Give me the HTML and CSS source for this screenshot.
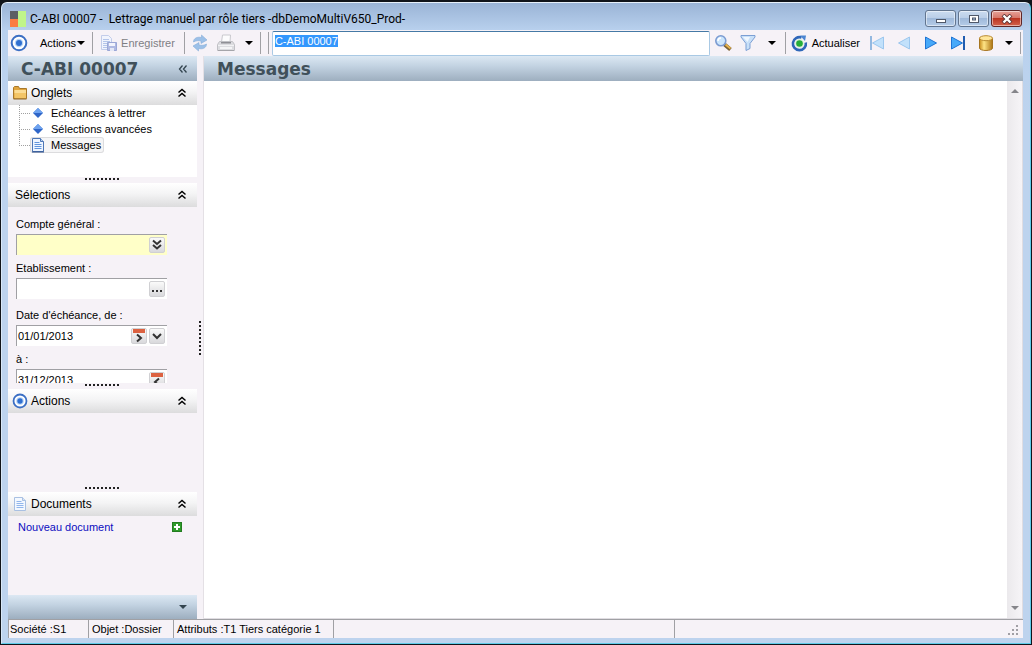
FILE: index.html
```
<!DOCTYPE html>
<html lang="fr">
<head>
    <meta charset="UTF-8">
    <meta name="viewport" content="width=device-width, initial-scale=1.0">
    <title>C-ABI 00007 - Lettrage manuel par rôle tiers</title>
    <link rel="stylesheet" href="styles.css">
</head>
<body>
    <div class="window">
        <header class="title-bar">
            <svg class="app-icon" width="16" height="16" viewBox="0 0 16 16">
                <rect width="8" height="8" fill="#5c6064"/>
                <rect y="8" width="8" height="8" fill="#fb7c41"/>
                <rect x="8" width="8" height="16" fill="#c0f58a"/>
            </svg>
            <span class="window-title">C-ABI 00007 -&nbsp; Lettrage manuel par rôle tiers -dbDemoMultiV650_Prod-</span>
            <div class="window-buttons">
                <button class="window-button" aria-label="Réduire">
                    <svg width="12" height="10" viewBox="0 0 12 10"><rect x="1.500" y="5.500" width="9" height="3" fill="#fff" stroke="#50596a"/></svg>
                </button>
                <button class="window-button" aria-label="Agrandir">
                    <svg width="12" height="10" viewBox="0 0 12 10"><rect x="1.500" y="1.500" width="9" height="7" fill="#fff" stroke="#50596a"/><rect x="4.500" y="4" width="3" height="2" fill="#a8c4e4" stroke="#50596a"/></svg>
                </button>
                <button class="window-button close" aria-label="Fermer">
                    <svg width="12" height="10" viewBox="0 0 12 10"><path d="M2 1l8 8M10 1l-8 8" stroke="#5b3335" stroke-width="4"/><path d="M2.500 1.500l7 7M9.500 1.500l-7 7" stroke="#fff" stroke-width="2.400"/></svg>
                </button>
            </div>
        </header>

        <div class="toolbar">
            <button class="tool menu">
                <svg width="18" height="18" viewBox="0 0 18 18"><circle cx="9" cy="9" r="7.300" fill="#fff" stroke="#3b6fc4" stroke-width="2"/><circle cx="9" cy="9" r="4.300" fill="#b9d5f7"/><circle cx="9" cy="9" r="3" fill="#2f6fd0"/></svg>
                <span class="menu-label">Actions</span>
                <span class="arrow"></span>
            </button>
            <span class="separator"></span>
            <button class="tool save" disabled>
                <svg width="17" height="17" viewBox="0 0 17 17">
                    <path d="M1.500 .5h7l3 3v11h-10z" fill="#f1f4fd" stroke="#c3cdea"/><path d="M3 4.500h6M3 6.500h7M3 8.500h4M3 10.500h4M3 12.500h4" stroke="#b4c5ea"/>
                    <path d="M7.500 7.500h9v8h-9z" fill="#b0bae3" stroke="#9ba7d6"/><path d="M9 8h6v3H9z" fill="#f2f4fd"/><path d="M10 13h4v3h-4z" fill="#e4e8f7"/>
                </svg>
                <span>Enregistrer</span>
            </button>
            <span class="separator"></span>
            <button class="tool" aria-label="Synchroniser">
                <svg width="16" height="18" viewBox="0 0 16 18">
                    <path d="M1.500 8c0-4 4-5.500 8-4.500V1l5.500 5-6 3.500V7C6.500 6.500 4 6.500 1.500 8z" fill="#9cc0e8" stroke="#86acd8" stroke-width=".6"/>
                    <path d="M14.500 10c0 4-4 5.500-8 4.500V17L1 12l6-3.500V11c2.500.5 5 .5 7.500-1z" fill="#9cc0e8" stroke="#86acd8" stroke-width=".6"/>
                </svg>
            </button>
            <button class="tool print" aria-label="Imprimer">
                <svg width="18" height="18" viewBox="0 0 18 18">
                    <path d="M4.500 8L5.500 1h8l-.5 7z" fill="#fcfcfd" stroke="#c9c9ce"/>
                    <path d="M2.500 7.500h13l2 3v6H.500v-6z" fill="#dcdce0" stroke="#c0c0c5"/><path d="M4 8h10v1.500H4z" fill="#8f8f95"/><path d="M1 11.500h16" stroke="#f2f2f4"/><path d="M3 14h12" stroke="#f5f5f7" stroke-width="2"/><path d="M1 16.500h16" stroke="#a5a5aa"/>
                </svg>
                <span class="arrow"></span>
            </button>
            <span class="separator"></span>
            <span class="separator"></span>
            <input class="search-box" type="text" value="C-ABI 00007" aria-label="Référence">
            <button class="tool" aria-label="Rechercher">
                <svg width="18" height="18" viewBox="0 0 18 18"><path d="M10.500 10.500l6 5" stroke="#7a6134" stroke-width="4"/><path d="M11.500 10.500l5 4" stroke="#e7b34c" stroke-width="2"/><circle cx="6.800" cy="6.800" r="5" fill="#cbe5fc" stroke="#7b9bd1" stroke-width="1.600"/><path d="M4 7a3 3 0 0 1 3-3" fill="none" stroke="#fff" stroke-width="1.500"/></svg>
            </button>
            <button class="tool filter" aria-label="Filtrer">
                <svg width="16" height="18" viewBox="0 0 16 18"><path d="M1 1.500h14v1.500l-5 6.500v5l-4 2V9.500L1 3z" fill="#c9e0f8" stroke="#7b9fd4"/><path d="M3 3h7L7.500 8z" fill="#eff7ff"/></svg>
                <span class="arrow"></span>
            </button>
            <span class="separator"></span>
            <button class="tool refresh">
                <svg width="17" height="17" viewBox="0 0 17 17"><path d="M14.800 7.500a6.500 6.500 0 1 1-4.300-5" fill="none" stroke="#2f67b9" stroke-width="2.600"/><path d="M9 .500h6l-1 5.500z" fill="#4b86d2"/><circle cx="8.500" cy="8.500" r="4.500" fill="#dff3dd"/><circle cx="8.500" cy="8.500" r="3.300" fill="#26ad3a"/></svg>
                <span>Actualiser</span>
            </button>
            <div class="record-nav">
                <button class="tool" aria-label="Premier">
                    <svg width="16" height="16" viewBox="0 0 16 16"><path d="M14.500 2v12L3.500 8z" fill="#c2e1fb" stroke="#9cc7ee"/><path d="M2 1v14" stroke="#93b8e0" stroke-width="2"/></svg>
                </button>
                <button class="tool" aria-label="Précédent">
                    <svg width="16" height="16" viewBox="0 0 16 16"><path d="M13.500 2v12L2.500 8z" fill="#c2e1fb" stroke="#9cc7ee"/></svg>
                </button>
                <button class="tool" aria-label="Suivant">
                    <svg width="16" height="16" viewBox="0 0 16 16"><path d="M2.500 2v12l11-6z" fill="#47a9f9" stroke="#1f74d4"/></svg>
                </button>
                <button class="tool" aria-label="Dernier">
                    <svg width="16" height="16" viewBox="0 0 16 16"><path d="M1.500 2v12l11-6z" fill="#47a9f9" stroke="#1f74d4"/><path d="M14 1v14" stroke="#205cb0" stroke-width="2"/></svg>
                </button>
            </div>
            <button class="tool database" aria-label="Base de données">
                <svg width="16" height="16" viewBox="0 0 16 16">
                    <defs><linearGradient id="gold"><stop offset="0" stop-color="#c88c1c"/><stop offset=".35" stop-color="#ffe486"/><stop offset="1" stop-color="#ad7414"/></linearGradient></defs>
                    <path d="M1.500 3v10c0 3.300 13 3.300 13 0V3z" fill="url(#gold)" stroke="#a77520"/><ellipse cx="8" cy="3.200" rx="6.500" ry="2.500" fill="#ffe69a" stroke="#b98a31"/>
                </svg>
                <span class="arrow"></span>
            </button>
            <span class="separator"></span>
        </div>

        <div class="workspace">
            <aside class="sidebar">
                <div class="banner">
                    <h1>C-ABI 00007</h1>
                    <button class="collapse" aria-label="Replier le volet">
                        <svg width="10" height="10" viewBox="0 0 10 10"><path d="M4.500 1.500L1.500 5l3 3.500M8.500 1.500l-3 3.500 3 3.500" fill="none" stroke="#33444f" stroke-width="1.300"/></svg>
                    </button>
                </div>

                <section class="panel">
                    <div class="panel-header">
                        <svg width="16" height="16" viewBox="0 0 16 16"><path d="M1.500 13.500v-11l1-1h4l1 2h7v10z" fill="#e0a43c" stroke="#a8782a"/><path d="M2.500 5h11.500v8.500H2.500z" fill="#f3c566"/><path d="M2.500 5h11.500v3H2.500z" fill="#fbdc94"/><path d="M1.500 14h13" stroke="#8d6323"/></svg>
                        <h2>Onglets</h2>
                        <button class="collapse" aria-label="Replier Onglets"><svg width="10" height="10" viewBox="0 0 10 10"><path d="M1.500 4.500L5 1.500l3.500 3M1.500 8.500L5 5.500l3.500 3" fill="none" stroke="#000" stroke-width="1.500"/></svg></button>
                    </div>
                    <ul class="tree">
                        <li>
                            <a href="#echeances"><svg width="16" height="16" viewBox="0 0 16 16"><path d="M8 3l5 5-5 5-5-5z" fill="#2f66c8"/><path d="M8 3l5 5H3z" fill="#6ea3f0"/></svg><span>Echéances à lettrer</span></a>
                        </li>
                        <li>
                            <a href="#selections"><svg width="16" height="16" viewBox="0 0 16 16"><path d="M8 3l5 5-5 5-5-5z" fill="#2f66c8"/><path d="M8 3l5 5H3z" fill="#6ea3f0"/></svg><span>Sélections avancées</span></a>
                        </li>
                        <li>
                            <a class="active" href="#messages"><svg width="16" height="16" viewBox="0 0 16 16"><path d="M2.500 1.500h8l3 3v10h-11z" fill="#eef5ff" stroke="#4d76b5"/><path d="M10.500 1.500v3h3" fill="#b8d1f2" stroke="#4d76b5"/><path d="M4.500 5.500h5M4.500 7.500h7M4.500 9.500h7M4.500 11.500h7" stroke="#6094dc"/><path d="M2 15h12" stroke="#2e4f88"/></svg><span>Messages</span></a>
                        </li>
                    </ul>
                </section>
                <div class="splitter"></div>

                <section class="panel">
                    <div class="panel-header plain">
                        <h2>Sélections</h2>
                        <button class="collapse" aria-label="Replier Sélections"><svg width="10" height="10" viewBox="0 0 10 10"><path d="M1.500 4.500L5 1.500l3.500 3M1.500 8.500L5 5.500l3.500 3" fill="none" stroke="#000" stroke-width="1.500"/></svg></button>
                    </div>
                    <form class="filters">
                        <label for="compte">Compte général :</label>
                        <div class="field required">
                            <input id="compte" type="text">
                            <button type="button" aria-label="Choisir un compte"><svg width="12" height="12" viewBox="0 0 12 12"><path d="M2 1.500l4 3.500 4-3.500M2 6l4 3.500L10 6" fill="none" stroke="#333" stroke-width="2"/></svg></button>
                        </div>
                        <label for="etablissement">Etablissement :</label>
                        <div class="field">
                            <input id="etablissement" type="text">
                            <button type="button" aria-label="Choisir un établissement"><svg width="12" height="12" viewBox="0 0 12 12"><path d="M1 7h2v2H1zM5 7h2v2H5zM9 7h2v2H9z" fill="#333"/></svg></button>
                        </div>
                        <label class="spaced" for="date-debut">Date d'échéance, de :</label>
                        <div class="field">
                            <input id="date-debut" type="text" value="01/01/2013">
                            <button class="calendar" type="button" aria-label="Date suivante"><svg width="14" height="14" viewBox="0 0 14 14"><path d="M1 0h12v4H1z" fill="#dc6241"/><path d="M5 5.500L9 9l-4 3.500" fill="none" stroke="#333" stroke-width="2"/></svg></button>
                            <button type="button" aria-label="Ouvrir le calendrier"><svg width="12" height="12" viewBox="0 0 12 12"><path d="M2 4l4 4 4-4" fill="none" stroke="#333" stroke-width="2"/></svg></button>
                        </div>
                        <label for="date-fin">à :</label>
                        <div class="field">
                            <input id="date-fin" type="text" value="31/12/2013">
                            <button class="calendar" type="button" aria-label="Date précédente"><svg width="14" height="14" viewBox="0 0 14 14"><path d="M1 0h12v4H1z" fill="#dc6241"/><path d="M9 5.500L5 9l4 3.500" fill="none" stroke="#333" stroke-width="2"/></svg></button>
                        </div>
                    </form>
                </section>
                <div class="splitter"></div>

                <section class="panel">
                    <div class="panel-header">
                        <svg width="16" height="16" viewBox="0 0 18 18"><circle cx="9" cy="9" r="7.300" fill="#fff" stroke="#3b6fc4" stroke-width="2"/><circle cx="9" cy="9" r="4.300" fill="#b9d5f7"/><circle cx="9" cy="9" r="3" fill="#2f6fd0"/></svg>
                        <h2>Actions</h2>
                        <button class="collapse" aria-label="Replier Actions"><svg width="10" height="10" viewBox="0 0 10 10"><path d="M1.500 4.500L5 1.500l3.500 3M1.500 8.500L5 5.500l3.500 3" fill="none" stroke="#000" stroke-width="1.500"/></svg></button>
                    </div>
                    <div class="actions-list"></div>
                </section>
                <div class="splitter"></div>

                <section class="panel documents">
                    <div class="panel-header">
                        <svg width="16" height="16" viewBox="0 0 16 16"><path d="M2.500 1.500h8l3 3v10h-11z" fill="#f3f8ff" stroke="#a9c0e2"/><path d="M10.500 1.500v3h3" fill="#d5e3f6" stroke="#a9c0e2"/><path d="M4.500 5.500h5M4.500 7.500h7M4.500 9.500h7M4.500 11.500h7" stroke="#92b6ec"/></svg>
                        <h2>Documents</h2>
                        <button class="collapse" aria-label="Replier Documents"><svg width="10" height="10" viewBox="0 0 10 10"><path d="M1.500 4.500L5 1.500l3.500 3M1.500 8.500L5 5.500l3.500 3" fill="none" stroke="#000" stroke-width="1.500"/></svg></button>
                    </div>
                    <div class="document-row">
                        <a href="#nouveau">Nouveau document</a>
                        <button aria-label="Ajouter un document"><svg width="10" height="10" viewBox="0 0 10 10"><rect x=".5" y=".5" width="9" height="9" fill="#2f9b2b" stroke="#237c20"/><path d="M5 2v6M2 5h6" stroke="#fff" stroke-width="2"/></svg></button>
                    </div>
                </section>
                <div class="sidebar-footer"><button aria-label="Autres volets"><span class="arrow"></span></button></div>
            </aside>

            <div class="side-splitter"></div>

            <main class="content">
                <div class="banner"><h1>Messages</h1></div>
                <div class="message-area">
                    <div class="scrollbar">
                        <svg width="8" height="4" viewBox="0 0 8 4"><path d="M0 4l4-4 4 4z" fill="#85858a"/></svg>
                        <svg width="8" height="4" viewBox="0 0 8 4"><path d="M0 0l4 4 4-4z" fill="#85858a"/></svg>
                    </div>
                </div>
            </main>
        </div>

        <footer class="status-bar">
            <span class="company">Société :S1</span>
            <span class="object">Objet :Dossier</span>
            <span class="attributes">Attributs :T1 Tiers catégorie 1</span>
            <span class="info"></span>
            <span class="rest"></span>
            <svg class="grip" width="12" height="12" viewBox="0 0 12 12"><path d="M8 0h2v2H8zM4 4h2v2H4zM8 4h2v2H8zM0 8h2v2H0zM4 8h2v2H4zM8 8h2v2H8z" fill="#a19fa5"/></svg>
        </footer>
    </div>

    <script>
        // Open with the reference selected
        const searchBox = document.querySelector('.search-box');
        searchBox.focus();
        searchBox.select();
    </script>
</body>
</html>
```
FILE: styles.css
```
:root {
    --frame-color: #bdd3ee;
    --bg-color: #f6f2f7;
    --border-color: #a0a0a4;
    --banner-text: #40505a;
    --banner: linear-gradient(#dce8f3, #c3d3e2 40%, #9daebf);
    --panel-header: linear-gradient(#ffffff, #f4f4f5 45%, #dcdcdd);
}

* {
    box-sizing: border-box;
}

body {
    margin: 0;
    height: 100vh;
    padding: 2px 1px 1px;
    overflow: hidden;
    background-color: #10141a;
    color: #000;
    font-family: "Liberation Sans", Arial, sans-serif;
    font-size: 11px;
}

button {
    display: flex;
    align-items: center;
    justify-content: center;
    flex: none;
    padding: 0;
    border: none;
    background: none;
    color: inherit;
    font: inherit;
}

svg {
    display: block;
    flex: none;
}

.window {
    display: flex;
    flex-direction: column;
    height: 100%;
    padding: 0 7px 5px 6px;
    border: 1px solid #5ecbe8;
    border-top-color: #e6f0fa;
    border-left-color: #d9e8f8;
    border-radius: 6px 6px 0 0;
    background: linear-gradient(#9ab4d6, #b9d1ee 28px, var(--frame-color) 118px);
}

/* Title bar */
.title-bar {
    display: flex;
    align-items: center;
    flex: none;
    height: 27px;
    padding: 4px 1px 0 2px;
}

.window-title {
    flex: 1;
    margin-left: 4px;
    font-family: Roboto, "Segoe UI", sans-serif;
    font-size: 12px;
    white-space: nowrap;
}

.window-buttons {
    display: flex;
    gap: 2px;
}

.window-button {
    width: 31px;
    height: 17px;
    border: 1px solid #62758f;
    border-radius: 3px;
    background: linear-gradient(#cbdcf0, #b9cde7 50%, #9fb9da 50%, #b5cce8);
    box-shadow: inset 0 0 0 1px rgba(255, 255, 255, 0.5);
}

.window-button.close {
    border-color: #5f2627;
    background: linear-gradient(#e7a299, #d67366 50%, #bb3522 50%, #d3624c);
}

/* Toolbar */
.toolbar {
    display: flex;
    align-items: center;
    flex: none;
    height: 26px;
    padding: 0 2px;
    background-color: var(--bg-color);
}

.tool:disabled {
    color: #7e7e84;
}

.menu-label {
    margin: 0 1px 0 12px;
}

.arrow {
    border: 4px solid transparent;
    border-top-color: currentColor;
    border-bottom: none;
}

.separator {
    flex: none;
    width: 1px;
    height: 22px;
    margin: 0 7px;
    background-color: var(--border-color);
}

.separator + .separator {
    margin: 0 3px 0 0;
}

.separator:last-child {
    margin-right: 0;
}

.save {
    gap: 4px;
    margin-right: 2px;
}

.print {
    gap: 10px;
    margin-left: 9px;
}

.search-box {
    flex: 1;
    align-self: stretch;
    min-width: 80px;
    margin: 1px 4px 0 0;
    padding: 1px 2px 7px;
    border: 1px solid #a9c9e4;
    border-top-color: #4579a5;
    border-radius: 2px;
    outline: none;
    background-color: #fff;
    font: inherit;
}

.search-box::selection {
    background-color: #3397fd;
    color: #fff;
}

.filter {
    gap: 12px;
    margin-left: 8px;
}

.filter + .separator {
    margin: 0 5px 0 9px;
}

.refresh {
    gap: 4px;
}

.record-nav {
    display: flex;
    gap: 11px;
    margin: 0 12px 0 9px;
}

.database {
    gap: 11px;
}

/* Workspace */
.workspace {
    display: flex;
    flex: 1;
    min-height: 0;
    background-color: var(--bg-color);
}

.banner {
    display: flex;
    align-items: center;
    justify-content: space-between;
    flex: none;
    height: 25px;
    padding: 0 9px 0 13px;
    background: var(--banner);
    color: var(--banner-text);
}

.banner h1 {
    margin: 0;
    font-family: "DejaVu Sans", Verdana, sans-serif;
    font-size: 17px;
    font-weight: bold;
    line-height: 24px;
}

.sidebar {
    display: flex;
    flex-direction: column;
    flex: none;
    width: 189px;
}

.panel {
    flex: none;
}

.panel-header {
    display: flex;
    align-items: center;
    gap: 3px;
    height: 24px;
    padding: 0 10px 0 4px;
    background: var(--panel-header);
}

.panel-header.plain {
    padding-left: 7px;
}

.panel-header h2 {
    flex: 1;
    margin: 0;
    font-size: 12px;
    font-weight: normal;
}

.tree {
    height: 72px;
    margin: 0;
    padding: 0 0 0 11px;
    background-color: #fff;
    list-style: none;
}

/* Dotted lines that join the tree items */
.tree li {
    display: flex;
    align-items: center;
    height: 16px;
    background: repeating-linear-gradient(#a0a0a0 0 1px, transparent 1px 2px) left top / 1px 100% no-repeat;
}

.tree li:last-child {
    background-size: 1px 8px;
}

.tree li::before {
    content: "";
    width: 11px;
    height: 1px;
    background: repeating-linear-gradient(90deg, #a0a0a0 0 1px, transparent 1px 2px);
}

.tree a {
    display: flex;
    align-items: center;
    gap: 5px;
    height: 16px;
    padding-right: 3px;
    border-radius: 3px;
    color: #000;
    text-decoration: none;
}

.tree a.active {
    background-color: #f5f5f6;
    box-shadow: inset 0 0 0 1px #dcdcde;
}

.splitter {
    display: flex;
    align-items: flex-start;
    justify-content: center;
    flex: none;
    height: 6px;
    padding-top: 1px;
}

.splitter::before {
    content: "";
    width: 35px;
    height: 2px;
    background: repeating-linear-gradient(90deg, #222 0 2px, transparent 2px 4px);
}

.filters {
    height: 176px;
    padding: 10px 30px 0 8px;
    overflow: hidden;
}

.filters label {
    display: block;
    height: 14px;
    margin-bottom: 3px;
    line-height: 14px;
}

.filters label.spaced {
    margin-top: 9px;
}

.field {
    display: flex;
    align-items: center;
    gap: 2px;
    height: 21px;
    margin-bottom: 6px;
    padding-right: 2px;
    border-top: 1px solid var(--border-color);
    border-left: 1px solid var(--border-color);
    background-color: #fff;
}

.field.required {
    background-color: #ffffc8;
}

.field input {
    flex: 1;
    min-width: 0;
    padding: 0 1px;
    border: none;
    outline: none;
    background: none;
    font: inherit;
}

.field button {
    width: 16px;
    height: 16px;
    border: 1px solid #d0d0d3;
    border-radius: 2px;
    background: linear-gradient(#fafafa, #d9d9dc);
}

.actions-list {
    height: 73px;
}

.documents {
    flex: 1;
}

.document-row {
    display: flex;
    align-items: center;
    justify-content: space-between;
    padding: 5px 15px 0 10px;
}

.document-row a {
    color: #0d0dc0;
    text-decoration: none;
}

.sidebar-footer {
    display: flex;
    align-items: center;
    justify-content: flex-end;
    flex: none;
    height: 24px;
    padding-right: 10px;
    background: var(--banner);
    color: #33444f;
}

.side-splitter {
    display: flex;
    align-items: center;
    justify-content: center;
    flex: none;
    width: 7px;
    border-right: 1px solid #e4e0e5;
}

.side-splitter::before {
    content: "";
    width: 2px;
    height: 34px;
    background: repeating-linear-gradient(#222 0 2px, transparent 2px 4px);
}

.content {
    display: flex;
    flex-direction: column;
    flex: 1;
    min-width: 0;
}

.message-area {
    display: flex;
    justify-content: flex-end;
    flex: 1;
    border: 1px solid #e0dde2;
    border-width: 0 1px 1px 0;
    background-color: #fff;
}

.scrollbar {
    display: flex;
    flex-direction: column;
    align-items: center;
    justify-content: space-between;
    width: 15px;
    padding: 8px 0;
    background: linear-gradient(90deg, #ebe9ec, #f6f4f7);
}

/* Status bar */
.status-bar {
    display: flex;
    flex: none;
    height: 19px;
    border-top: 1px solid var(--border-color);
    background-color: var(--bg-color);
    line-height: 18px;
    white-space: nowrap;
}

.status-bar span {
    flex: none;
    padding-left: 3px;
    border-right: 1px solid var(--border-color);
}

.status-bar .company {
    width: 81px;
    padding-left: 1px;
    border-left: 1px solid var(--border-color);
}

.status-bar .object {
    width: 85px;
}

.status-bar .attributes {
    width: 160px;
}

.status-bar .info {
    flex: 0 1 341px;
}

.status-bar .rest {
    flex: 1;
    border-right: none;
}

.grip {
    align-self: flex-end;
    margin: 0 3px 1px 0;
}
```
